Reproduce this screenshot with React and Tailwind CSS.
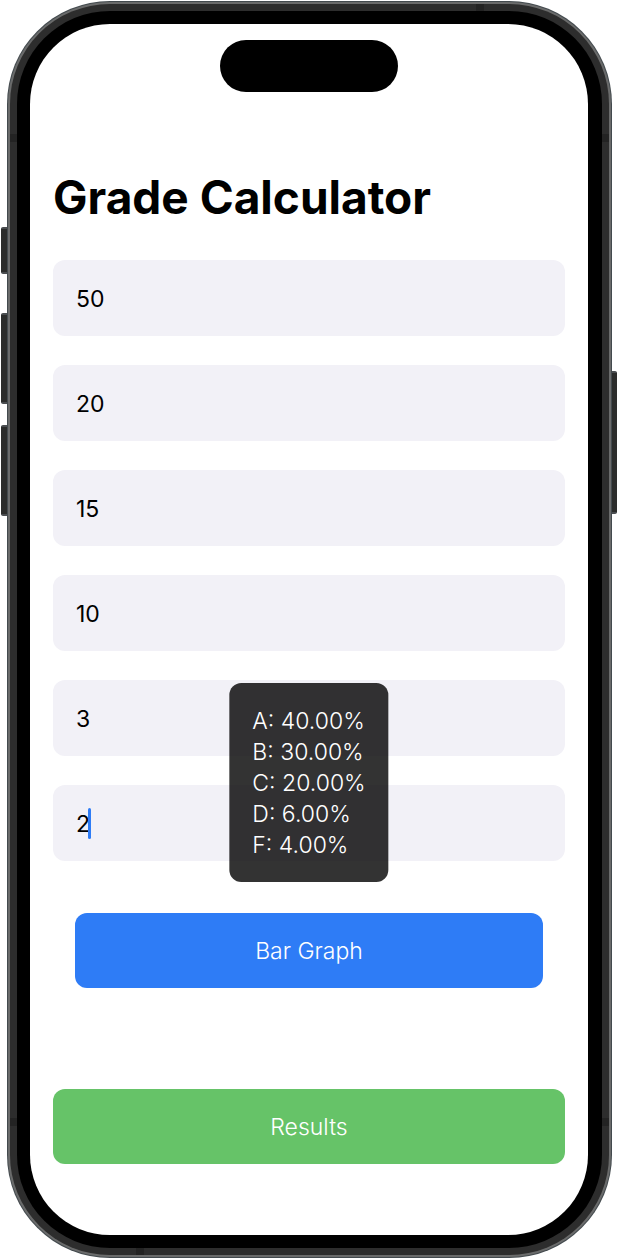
import { useState } from "react";

const fields = [
  { label: "A students", value: "50" },
  { label: "B students", value: "20" },
  { label: "C students", value: "15" },
  { label: "D students", value: "10" },
  { label: "F students", value: "3" },
  { label: "Other students", value: "2", active: true },
];

const results = ["A: 40.00%", "B: 30.00%", "C: 20.00%", "D: 6.00%", "F: 4.00%"];

function Field({ label, value, active }) {
  const [text, setText] = useState(value);
  return (
    <div className="relative flex items-center">
      <input
        type="text"
        inputMode="numeric"
        aria-label={label}
        value={text}
        onChange={(event) => setText(event.target.value)}
        className="h-[76px] w-full rounded-xl bg-[#f2f1f7] px-[23px] pt-0.5 text-[23px] text-black caret-[#2e7cf6] outline-none"
      />
      {active && (
        <span className="pointer-events-none absolute left-[35px] h-[31px] w-[3px] rounded-full bg-[#2e7cf6]" />
      )}
    </div>
  );
}

function Screen() {
  return (
    <main className="flex flex-col rounded-[80px] bg-white px-[23px] pt-4 pb-[71px]">
      <div className="h-[52px] w-[178px] self-center rounded-full bg-black" />

      <h1 className="mt-[75px] text-[46px] leading-[60px] font-bold text-black">
        Grade Calculator
      </h1>

      <form className="mt-[33px] flex flex-col" onSubmit={(event) => event.preventDefault()}>
        <div className="relative flex flex-col gap-[29px]">
          {fields.map((field) => (
            <Field key={field.label} {...field} />
          ))}
          <div
            role="status"
            className="absolute -bottom-[21px] left-1/2 -translate-x-1/2 rounded-xl bg-black/80 px-[23px] pt-[23px] pb-[21px] text-[23px] leading-[31px] font-light whitespace-nowrap text-white"
          >
            {results.map((line) => (
              <p key={line}>{line}</p>
            ))}
          </div>
        </div>

        <button
          type="button"
          className="mx-[22px] mt-[52px] h-[75px] rounded-xl bg-[#2e7cf6] pt-0.5 text-[23px] font-light text-white"
        >
          Bar Graph
        </button>
        <button
          type="submit"
          className="mt-[101px] h-[75px] rounded-xl bg-[#66c368] pt-0.5 text-[23px] font-light text-white"
        >
          Results
        </button>
      </form>
    </main>
  );
}

export default function App() {
  return (
    <div className="flex bg-white pt-px pr-1.5 pb-0.5 pl-px font-['Inter','Liberation_Sans',sans-serif]">
      <div className="flex w-1.5 shrink-0 flex-col pt-[226px]">
        <span className="h-[47px] rounded-l-[2px] border-y-2 border-[#4a4d50] bg-[#2b2c2b]" />
        <span className="mt-[39px] h-[91px] rounded-l-[2px] border-y-2 border-[#4a4d50] bg-[#2b2c2b]" />
        <span className="mt-[21px] h-[91px] rounded-l-[2px] border-y-2 border-[#4a4d50] bg-[#2b2c2b]" />
      </div>

      <div className="min-w-0 flex-1 rounded-[103px] bg-[#434a4e] p-px">
        <div className="rounded-[102px] bg-[#6a6b6b] p-0.5">
          <div className="grid grid-cols-[7px_1fr_7px] grid-rows-[7px_1fr_7px] rounded-[100px] bg-[#2d2d2d]">
            <div className="col-span-3 flex justify-end pr-[125px]">
              <span className="w-2 bg-[#232323]" />
            </div>
            <div className="flex flex-col justify-between pt-[123px] pb-[122px]">
              <span className="h-2 bg-[#232323]" />
              <span className="h-2 bg-[#232323]" />
            </div>
            <div className="min-w-0 rounded-[93px] bg-black py-[13px] pr-3.5 pl-[13px]">
              <Screen />
            </div>
            <div className="flex flex-col justify-between pt-[123px] pb-[122px]">
              <span className="h-2 bg-[#232323]" />
              <span className="h-2 bg-[#232323]" />
            </div>
            <div className="col-span-3 flex pl-[126px]">
              <span className="w-2 bg-[#232323]" />
            </div>
          </div>
        </div>
      </div>

      <div className="flex w-[5px] shrink-0 flex-col pt-[370px]">
        <span className="h-[143px] rounded-r-[2px] border-y-2 border-[#4a4d50] bg-[#2b2c2b]" />
      </div>
    </div>
  );
}
